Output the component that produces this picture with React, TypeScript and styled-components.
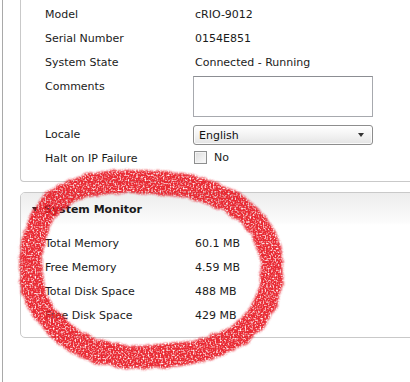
import React from 'react';
import styled, { createGlobalStyle } from 'styled-components';

const GlobalStyle = createGlobalStyle`
  html, body {
    margin: 0;
    padding: 0;
    background: #ffffff;
    overflow: hidden;
  }
  body {
    font-family: 'DejaVu Sans', Verdana, sans-serif;
    font-size: 11px;
    color: #1b1b1b;
  }
`;

type Field = { label: string; value: string };

const identity: Field[] = [
  { label: 'Model', value: 'cRIO-9012' },
  { label: 'Serial Number', value: '0154E851' },
  { label: 'System State', value: 'Connected - Running' },
];

const monitor: Field[] = [
  { label: 'Total Memory', value: '60.1 MB' },
  { label: 'Free Memory', value: '4.59 MB' },
  { label: 'Total Disk Space', value: '488 MB' },
  { label: 'Free Disk Space', value: '429 MB' },
];

// hand-drawn marker loop, points along the stroke centre
const loop: [number, number][] = [
  [115, 182], [160, 183], [205, 191], [240, 208], [263, 233], [272, 262],
  [267, 298], [247, 328], [212, 347], [165, 356], [120, 356], [82, 345],
  [51, 321], [33, 290], [31, 258], [35, 236], [43, 216], [58, 199], [82, 187],
];

const smoothPath = (pts: [number, number][]) => {
  const n = pts.length;
  let d = `M${pts[0][0]},${pts[0][1]}`;
  for (let i = 0; i < n; i++) {
    const p0 = pts[(i - 1 + n) % n];
    const p1 = pts[i];
    const p2 = pts[(i + 1) % n];
    const p3 = pts[(i + 2) % n];
    const c1x = p1[0] + (p2[0] - p0[0]) / 6;
    const c1y = p1[1] + (p2[1] - p0[1]) / 6;
    const c2x = p2[0] - (p3[0] - p1[0]) / 6;
    const c2y = p2[1] - (p3[1] - p1[1]) / 6;
    d += ` C${c1x.toFixed(1)},${c1y.toFixed(1)} ${c2x.toFixed(1)},${c2y.toFixed(1)} ${p2[0]},${p2[1]}`;
  }
  return d;
};

const App = () => {
  return (
    <>
      <GlobalStyle />
      <Page>
        <Frame>
          <TopPanel>
            {identity.map((f) => (
              <Row key={f.label}>
                <Label>{f.label}</Label>
                <Value>{f.value}</Value>
              </Row>
            ))}
            <Row $tall>
              <Label>Comments</Label>
              <Comments />
            </Row>
            <Row>
              <Label>Locale</Label>
              <Select>
                <span>English</span>
                <Caret />
              </Select>
            </Row>
            <Row>
              <Label>Halt on IP Failure</Label>
              <CheckLine>
                <Checkbox />
                <span>No</span>
              </CheckLine>
            </Row>
          </TopPanel>

          <MonitorPanel>
            <PanelHeader>
              <Toggle />
              <HeaderTitle>System Monitor</HeaderTitle>
            </PanelHeader>
            <PanelBody>
              {monitor.map((f) => (
                <Row key={f.label}>
                  <Label>{f.label}</Label>
                  <Value>{f.value}</Value>
                </Row>
              ))}
            </PanelBody>
          </MonitorPanel>
        </Frame>

        <Scribble width={410} height={382} viewBox='0 0 410 382'>
          <defs>
            <filter id='marker' x='-10%' y='-10%' width='120%' height='120%'>
              <feTurbulence type='fractalNoise' baseFrequency='0.1' numOctaves='2' seed='3' result='wobble' />
              <feDisplacementMap in='SourceGraphic' in2='wobble' scale='5' xChannelSelector='R' yChannelSelector='G' result='moved' />
              <feGaussianBlur in='moved' stdDeviation='0.9' result='soft' />
              <feTurbulence type='fractalNoise' baseFrequency='0.6' numOctaves='1' seed='9' result='grain' />
              <feColorMatrix
                in='grain'
                type='matrix'
                values='0 0 0 0 0  0 0 0 0 0  0 0 0 0 0  0 0 0 -3.2 2.5'
                result='grainMask'
              />
              <feComposite in='soft' in2='grainMask' operator='in' />
            </filter>
          </defs>
          <path
            d={smoothPath(loop)}
            fill='none'
            stroke='#e81f28'
            strokeWidth={23}
            strokeOpacity={0.94}
            strokeLinejoin='round'
            filter='url(#marker)'
          />
        </Scribble>
      </Page>
    </>
  );
};

export default App;

const Page = styled.div`
  position: relative;
  width: 410px;
  height: 382px;
  overflow: hidden;
  padding-left: 2px;
  box-sizing: border-box;
  display: flex;
`;

const Frame = styled.div`
  flex: 1;
  border-left: 1px solid #a9a9a9;
  padding-left: 17px;
  display: flex;
  flex-direction: column;
  gap: 10px;
`;

const TopPanel = styled.section`
  width: 420px;
  padding: 3px 0 10px 24px;
  border-left: 1px solid #c9c9c9;
  border-bottom: 1px solid #c9c9c9;
  border-bottom-left-radius: 4px;
`;

const MonitorPanel = styled.section`
  width: 420px;
  border: 1px solid #c9c9c9;
  border-radius: 5px 0 0 5px;
  overflow: hidden;
`;

const PanelHeader = styled.div`
  height: 32px;
  display: flex;
  align-items: center;
  padding-left: 11px;
  background: linear-gradient(#ededed, #fbfbfb 90%, #ffffff);
`;

const Toggle = styled.span`
  width: 0;
  height: 0;
  border-left: 3.5px solid transparent;
  border-right: 3.5px solid transparent;
  border-top: 5px solid #222;
  margin-right: 6px;
`;

const HeaderTitle = styled.span`
  font-weight: bold;
  color: #1a1a1a;
`;

const PanelBody = styled.div`
  padding: 7px 0 9px 24px;
`;

const Row = styled.div<{ $tall?: boolean }>`
  display: grid;
  grid-template-columns: 148px 180px;
  align-items: ${({ $tall }) => ($tall ? 'start' : 'center')};
  height: ${({ $tall }) => ($tall ? '48px' : '24px')};
`;

const Label = styled.span`
  line-height: 24px;
  white-space: nowrap;
`;

const Value = styled.span`
  padding-left: 2px;
  line-height: 24px;
  white-space: nowrap;
`;

const Comments = styled.div`
  margin-top: 1px;
  height: 39px;
  border: 1px solid #a7a9ae;
  border-top-color: #8c8e93;
  background: #fff;
`;

const Select = styled.div`
  height: 18px;
  border: 1px solid #8d8d8d;
  border-radius: 3px;
  background: linear-gradient(#ffffff, #f3f3f3 50%, #e4e4e4);
  box-shadow: inset 0 0 0 1px rgba(255, 255, 255, 0.8);
  display: flex;
  align-items: center;
  justify-content: space-between;
  padding: 0 8px 0 5px;
  color: #111;
`;

const Caret = styled.span`
  width: 0;
  height: 0;
  border-left: 3.5px solid transparent;
  border-right: 3.5px solid transparent;
  border-top: 4px solid #333;
`;

const CheckLine = styled.div`
  display: flex;
  align-items: center;
  gap: 7px;
  padding-left: 1px;
  margin-top: -3px;
`;

const Checkbox = styled.span`
  width: 11px;
  height: 11px;
  border: 1px solid #8e8f8f;
  background: linear-gradient(135deg, #dcdcdc, #fbfbfb);
  box-shadow: inset 0 0 0 1px #f4f4f4;
`;

const Scribble = styled.svg`
  position: absolute;
  top: 0;
  left: 0;
  pointer-events: none;
`;
